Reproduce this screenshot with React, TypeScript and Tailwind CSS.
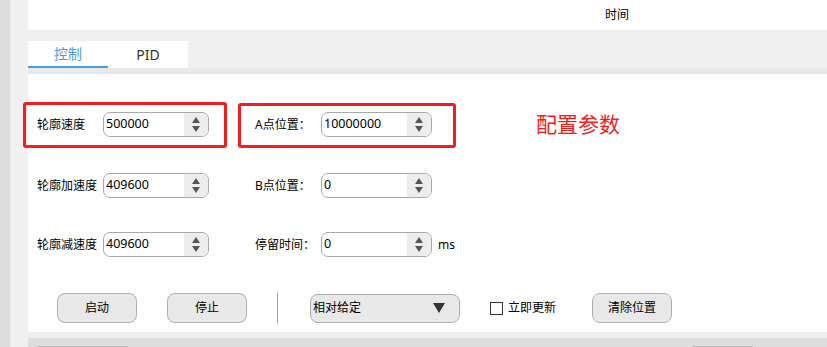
const font = { fontFamily: '"Noto Sans", "Noto Sans CJK SC", sans-serif' };

function SpinBox({ value, width }: { value: string; width: string }) {
  return (
    <div className={`flex h-[25px] ${width} items-stretch overflow-hidden rounded-[7px] border border-[#a8a8a8] bg-white`}>
      <div className="flex flex-1 items-center pl-[2px] text-[12.5px] text-black">{value}</div>
      <div className="flex w-[24px] flex-col items-center justify-center gap-[3px] bg-[#ececec]">
        <svg width="8" height="6" viewBox="0 0 8 6">
          <path d="M4 0 L8 6 L0 6 Z" fill="#555" />
        </svg>
        <svg width="8" height="6" viewBox="0 0 8 6">
          <path d="M0 0 L8 0 L4 6 Z" fill="#555" />
        </svg>
      </div>
    </div>
  );
}

function Field({
  label,
  value,
  labelWidth,
  boxWidth,
}: {
  label: string;
  value: string;
  labelWidth: string;
  boxWidth: string;
}) {
  return (
    <div className="flex items-center">
      <span className={`${labelWidth} text-[12px] text-black`}>{label}</span>
      <SpinBox value={value} width={boxWidth} />
    </div>
  );
}

function Button({ children }: { children: string }) {
  return (
    <div className="flex h-[30px] w-[80px] items-center justify-center rounded-[8px] border border-[#adadad] bg-[#e8e8e8] text-[12px] text-black">
      {children}
    </div>
  );
}

export default function App() {
  return (
    <div className="flex h-[347px] w-[827px] overflow-hidden bg-white" style={font}>
      <div className="w-[10px] bg-[#dcdcdc]" />
      <div className="w-[18px] bg-[#f0f0f0]" />
      <div className="flex flex-1 flex-col">
        <div className="flex h-[30px] items-center bg-white pl-[577px] text-[12px] text-black">时间</div>
        <div className="flex h-[38px] items-end bg-[#efefef]">
          <div className="flex h-[27px] w-[80px] items-center justify-center border-b-2 border-[#4b9bea] bg-white text-[14px] text-[#4b9bea]">
            控制
          </div>
          <div className="flex h-[27px] w-[80px] items-center justify-center bg-white text-[14px] text-[#333]">
            PID
          </div>
        </div>
        <div className="h-[6px] bg-[#e8e8e8]" />
        <div className="relative flex h-[258px] flex-col bg-white pl-[9px] pt-[38px]">
          <div className="pointer-events-none absolute left-[-5px] top-[28px] h-[46px] w-[204px] rounded-[3px] border-[3px] border-[#f21d1d]" />
          <div className="pointer-events-none absolute left-[210px] top-[29px] h-[45px] w-[218px] rounded-[3px] border-[3px] border-[#f21d1d]" />

          <div className="flex h-[25px] items-center">
            <Field label="轮廓速度" value="500000" labelWidth="w-[66px]" boxWidth="w-[106px]" />
            <div className="ml-[46px]">
              <Field label="A点位置：" value="10000000" labelWidth="w-[66px]" boxWidth="w-[111px]" />
            </div>
            <span className="ml-[104px] text-[21px] text-[#f21d1d]">配置参数</span>
          </div>

          <div className="mt-[36px] flex h-[25px] items-center">
            <Field label="轮廓加速度" value="409600" labelWidth="w-[66px]" boxWidth="w-[106px]" />
            <div className="ml-[46px]">
              <Field label="B点位置：" value="0" labelWidth="w-[66px]" boxWidth="w-[111px]" />
            </div>
          </div>

          <div className="mt-[34px] flex h-[25px] items-center">
            <Field label="轮廓减速度" value="409600" labelWidth="w-[66px]" boxWidth="w-[106px]" />
            <div className="ml-[46px]">
              <Field label="停留时间：" value="0" labelWidth="w-[66px]" boxWidth="w-[111px]" />
            </div>
            <span className="ml-[6px] text-[12px] text-black">ms</span>
          </div>

          <div className="mt-[36px] flex h-[30px] items-center pl-[20px]">
            <Button>启动</Button>
            <div className="ml-[30px]">
              <Button>停止</Button>
            </div>
            <div className="ml-[30px] h-[30px] w-px bg-[#a0a0a0]" />
            <div className="ml-[32px] flex h-[29px] w-[150px] items-center justify-between rounded-[8px] border border-[#adadad] bg-[#e8e8e8] pl-[2px] pr-[14px] text-[12px] text-black">
              <span>相对给定</span>
              <svg width="12" height="10" viewBox="0 0 12 10">
                <path d="M0 0 L12 0 L6 10 Z" fill="#333" />
              </svg>
            </div>
            <div className="ml-[30px] h-[13px] w-[13px] border border-[#333] bg-white" />
            <span className="ml-[5px] text-[12px] text-black">立即更新</span>
            <div className="ml-[36px]">
              <Button>清除位置</Button>
            </div>
          </div>
        </div>
        <div className="h-[6px] bg-[#efefef]" />
        <div className="relative h-[9px] bg-[#dcdcdc]">
          <div className="absolute left-[10px] top-[8px] h-px w-[90px] bg-[#bdbdbd]" />
          <div className="absolute left-[665px] top-[8px] h-px w-[60px] bg-[#bdbdbd]" />
        </div>
      </div>
    </div>
  );
}
